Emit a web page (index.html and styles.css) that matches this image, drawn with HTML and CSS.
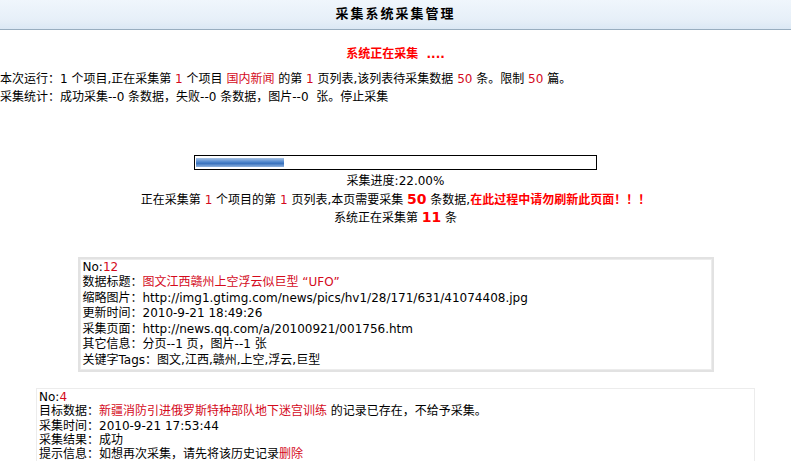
FILE: index.html
```html
<!DOCTYPE html>
<html lang="zh-CN">
<head>
  <meta charset="UTF-8">
  <title>采集系统采集管理</title>
  <link rel="stylesheet" href="styles.css">
</head>
<body>

  <div class="header">采集系统采集管理</div>

  <div class="status">系统正在采集 &nbsp;....</div>

  <div class="info">
    <div>本次运行：1 个项目,正在采集第 <span class="red">1</span> 个项目 <span class="red">国内新闻</span> 的第 <span class="red">1</span> 页列表,该列表待采集数据 <span class="red">50</span> 条。限制 <span class="red">50</span> 篇。</div>
    <div>采集统计：成功采集--0 条数据，失败--0 条数据，图片--0 &nbsp;张。停止采集</div>
  </div>

  <div class="progress">
    <div class="bar"><div class="fill" style="width: 22%;"></div></div>
    <div>采集进度:22.00%</div>
    <div>正在采集第 <span class="red">1</span> 个项目的第 <span class="red">1</span> 页列表,本页需要采集 <b class="num">50</b> 条数据,<b class="warn">在此过程中请勿刷新此页面！！！</b></div>
    <div>系统正在采集第 <b class="num">11</b> 条</div>
  </div>

  <div class="record">
    <div class="record-inner">
      <div>No:<span class="red">12</span></div>
      <div>数据标题：<span class="red">图文江西赣州上空浮云似巨型 “UFO”</span></div>
      <div>缩略图片：http://img1.gtimg.com/news/pics/hv1/28/171/631/41074408.jpg</div>
      <div>更新时间：2010-9-21 18:49:26</div>
      <div>采集页面：http://news.qq.com/a/20100921/001756.htm</div>
      <div>其它信息：分页--1 页，图片--1 张</div>
      <div>关键字Tags：图文,江西,赣州,上空,浮云,巨型</div>
    </div>
  </div>

  <div class="record old">
    <div>No:<span class="red">4</span></div>
    <div>目标数据：<span class="red">新疆消防引进俄罗斯特种部队地下迷宫训练</span> 的记录已存在，不给予采集。</div>
    <div>采集时间：2010-9-21 17:53:44</div>
    <div>采集结果：成功</div>
    <div>提示信息：如想再次采集，请先将该历史记录<span class="red">删除</span></div>
  </div>

</body>
</html>
```

FILE: styles.css
```css
body {
  margin: 0;
  background: #ffffff;
  font-family: 'DejaVu Sans', 'Noto Sans CJK SC', sans-serif;
  font-size: 12px;
  color: #000000;
  overflow: hidden;
}

.header {
  height: 29px;
  line-height: 27px;
  text-align: center;
  font-size: 13px;
  font-weight: bold;
  letter-spacing: 2px;
  background: linear-gradient(#f0f6fc, #e6eff8 70%, #dbe8f4);
  border-bottom: 1px solid #98adbf;
}

.red {
  color: #d40a1c;
}

.status {
  margin-top: 16px;
  line-height: 16px;
  text-align: center;
  color: #ff0000;
  font-weight: bold;
}

.info {
  margin-top: 8px;
  line-height: 18px;
}

.progress {
  margin-top: 49px;
  text-align: center;
  line-height: 17.5px;
}

.bar {
  width: 399px;
  height: 11px;
  margin: 0 auto 3px;
  padding: 1px;
  border: 1px solid #000000;
  text-align: left;
}

.fill {
  height: 9px;
  margin-top: 1px;
  background: linear-gradient(#a9c4e6, #4f86cc 45%, #3a72bd 60%, #8fb3df);
}

.num {
  color: #ff0000;
  font-size: 14px;
}

.warn {
  color: #ff0000;
}

.record {
  width: 632px;
  margin: 29px auto 0;
  border: 2px solid #e2e2e2;
  line-height: 15.5px;
}

.record-inner {
  border: 1px solid #ececec;
  padding: 0 2px 1px;
}

.record.old {
  width: 713px;
  margin-top: 16px;
  padding: 1px 2px;
  border: 1px solid #ececec;
  border-bottom: none;
  line-height: 14.3px;
}
```
